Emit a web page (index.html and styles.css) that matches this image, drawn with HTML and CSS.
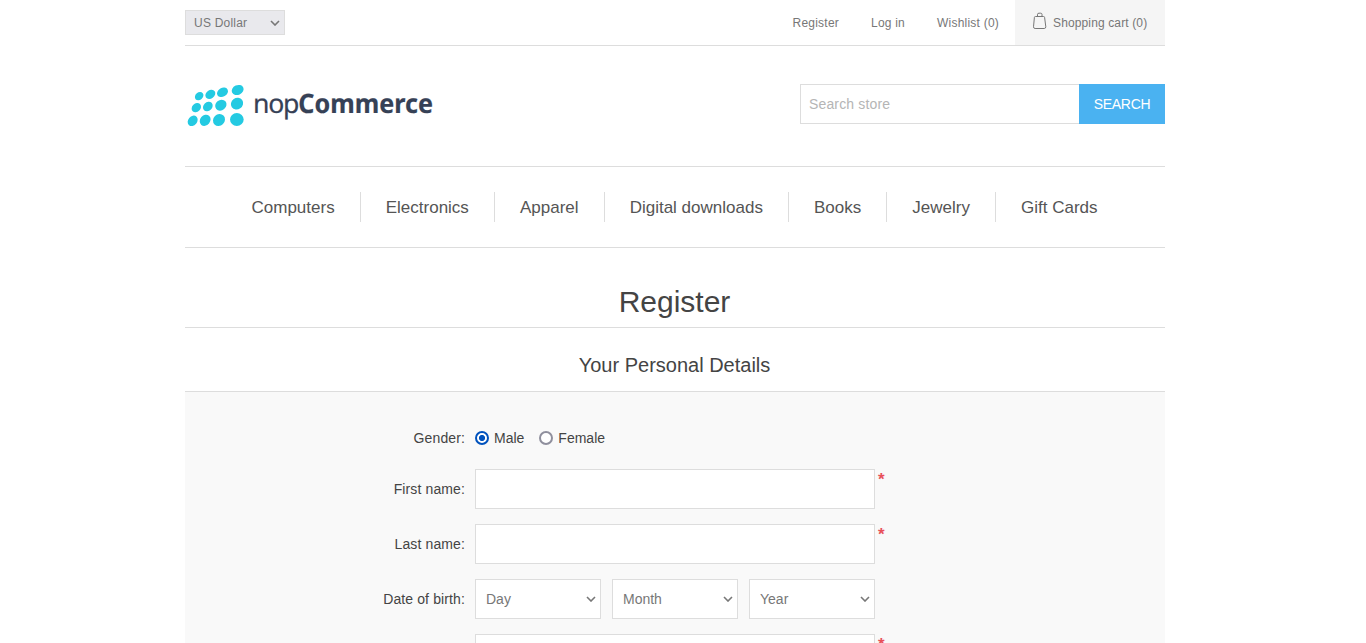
FILE: index.html
```html
<!DOCTYPE html>
<html lang="en">
<head>
<meta charset="utf-8">
<title>nopCommerce demo store. Register</title>
<link rel="stylesheet" href="styles.css">
</head>
<body>
<div class="page">
  <header>
    <div class="topbar">
      <div class="select currency">
        <select aria-label="Currency"><option>US Dollar</option></select>
        <svg class="chevron" viewBox="0 0 10 6"><path d="M1 1l4 4 4-4"/></svg>
      </div>
      <nav class="links">
        <a href="#">Register</a>
        <a href="#">Log in</a>
        <a href="#">Wishlist (0)</a>
        <a href="#" class="cart">
          <svg class="bag" viewBox="0 0 14 17"><path d="M2.400 4.500h8.200q.9 0 1 .9l1.200 9.400q0 1.700-1.600 1.700H2.100Q.5 16.500.5 14.800l.9-9.400q.1-.9 1-.9zM4.500 4.500V2.300Q4.500 1.200 6 1.200h1.500q1.500 0 1.500 1.100v2.200"/></svg>
          Shopping cart (0)
        </a>
      </nav>
    </div>
    <div class="brandbar">
      <svg class="logo" viewBox="15 0 750 180" role="img" aria-label="nopCommerce">
        <g fill="#24cae2">
          <ellipse cx="57.500" cy="60.500" rx="14" ry="11" transform="rotate(-40 57.500 60.500)"/>
          <ellipse cx="91" cy="55" rx="16" ry="12.500" transform="rotate(-35 91 55)"/>
          <ellipse cx="127.500" cy="49" rx="17.500" ry="13" transform="rotate(-30 127.500 49)"/>
          <ellipse cx="173" cy="42" rx="18.500" ry="14.500" transform="rotate(-25 173 42)"/>
          <ellipse cx="49" cy="95" rx="15.500" ry="12.500" transform="rotate(-45 49 95)"/>
          <ellipse cx="83.500" cy="91.500" rx="16" ry="13" transform="rotate(-45 83.500 91.500)"/>
          <ellipse cx="122.500" cy="87.500" rx="18" ry="15.500" transform="rotate(-40 122.500 87.500)"/>
          <ellipse cx="171" cy="83" rx="19" ry="17" transform="rotate(-35 171 83)"/>
          <ellipse cx="38" cy="134.500" rx="17" ry="13.500" transform="rotate(-50 38 134.500)"/>
          <ellipse cx="75.500" cy="133" rx="18" ry="15" transform="rotate(-50 75.500 133)"/>
          <ellipse cx="117" cy="132" rx="19" ry="17" transform="rotate(-45 117 132)"/>
          <ellipse cx="170.500" cy="130.500" rx="20.500" ry="19.500"/>
        </g>
        <text class="word" x="219" y="110" textLength="139">nop</text>
        <text class="word strong" x="355" y="110" textLength="404" lengthAdjust="spacingAndGlyphs">Commerce</text>
      </svg>
      <form class="search">
        <input type="text" placeholder="Search store" aria-label="Search store">
        <button type="button">SEARCH</button>
      </form>
    </div>
    <nav class="menu">
      <a href="#">Computers</a>
      <a href="#">Electronics</a>
      <a href="#">Apparel</a>
      <a href="#">Digital downloads</a>
      <a href="#">Books</a>
      <a href="#">Jewelry</a>
      <a href="#">Gift Cards</a>
    </nav>
  </header>
  <main>
    <h1>Register</h1>
    <h2>Your Personal Details</h2>
    <form class="details">
      <div class="row gender">
        <span class="label">Gender:</span>
        <label class="choice"><input type="radio" name="gender" checked>Male</label>
        <label class="choice"><input type="radio" name="gender">Female</label>
      </div>
      <div class="row">
        <label class="label" for="first">First name:</label>
        <input class="field" id="first" type="text"><span class="required">*</span>
      </div>
      <div class="row">
        <label class="label" for="last">Last name:</label>
        <input class="field" id="last" type="text"><span class="required">*</span>
      </div>
      <div class="row">
        <span class="label">Date of birth:</span>
        <div class="dates">
          <div class="select"><select aria-label="Day"><option>Day</option></select><svg class="chevron" viewBox="0 0 10 6"><path d="M1 1l4 4 4-4"/></svg></div>
          <div class="select"><select aria-label="Month"><option>Month</option></select><svg class="chevron" viewBox="0 0 10 6"><path d="M1 1l4 4 4-4"/></svg></div>
          <div class="select"><select aria-label="Year"><option>Year</option></select><svg class="chevron" viewBox="0 0 10 6"><path d="M1 1l4 4 4-4"/></svg></div>
        </div>
      </div>
      <div class="row">
        <span class="label"></span>
        <input class="field" type="text" aria-label="Email"><span class="required">*</span>
      </div>
    </form>
  </main>
</div>
</body>
</html>
```
FILE: styles.css
```css
* { box-sizing: border-box; }
html { height: 100%; overflow: hidden; }
body {
  height: 100%;
  overflow: hidden;
  margin: 0;
  padding-right: 16px;
  background: #fff;
  color: #444;
  font: 14px "Liberation Sans", Arial, sans-serif;
}
a { color: inherit; text-decoration: none; }
input, select, button { font: inherit; letter-spacing: inherit; border-radius: 0; margin: 0; }
.page { width: 980px; margin: 0 auto; }

.select { position: relative; }
.select select {
  appearance: none;
  display: block;
  width: 100%;
  height: 100%;
  border: 1px solid #ddd;
  background: #fff;
  color: #777;
}
.chevron {
  position: absolute;
  right: 5px;
  top: 50%;
  width: 10px;
  height: 6px;
  margin-top: -3px;
  fill: none;
  stroke: #777;
  stroke-width: 1.6;
  pointer-events: none;
}

.topbar {
  display: flex;
  justify-content: space-between;
  align-items: center;
  height: 46px;
  border-bottom: 1px solid #ddd;
  font-size: 12px;
  letter-spacing: .22px;
  color: #777;
}
.currency { width: 100px; height: 25px; }
.currency select { padding: 0 8px; background: #e9e9ed; }
.links { display: flex; height: 45px; line-height: 46px; }
.links a { margin-right: 32px; }
.links a:nth-child(3) { margin-right: 16px; }
.links .cart {
  display: flex;
  width: 150px;
  margin: 0;
  padding-left: 18px;
  background: #f5f5f5;
  letter-spacing: .13px;
}
.bag {
  width: 14px;
  height: 17px;
  margin: 12px 6px 0 0;
  fill: none;
  stroke: #777;
}

.brandbar {
  display: flex;
  justify-content: space-between;
  align-items: flex-start;
  height: 120px;
}
.logo { width: 250px; height: 60px; margin-top: 30px; }
.word {
  font: 80px "Noto Sans", sans-serif;
  fill: #364156;
  stroke: #364156;
  stroke-width: .6;
  text-rendering: geometricPrecision;
}
.strong { font-weight: 700; }
.search { display: flex; margin-top: 38px; height: 40px; }
.search input {
  width: 279px;
  padding: 0 8px;
  border: 1px solid #ddd;
  border-right: 0;
  letter-spacing: .15px;
}
.search input::placeholder { color: #b5b5b5; }
.search button {
  width: 86px;
  padding: 0;
  border: 0;
  background: #4ab2f1;
  color: #fff;
  letter-spacing: -.3px;
}

.menu {
  display: flex;
  justify-content: center;
  align-items: center;
  height: 82px;
  border: solid #ddd;
  border-width: 1px 0;
  font-size: 17px;
  color: #555;
}
.menu a { height: 30px; padding: 0 25px 0 25.1px; line-height: 32px; border-left: 1px solid #ddd; }
.menu a:first-child { border: 0; }
.menu a:last-child { padding-right: 26px; }

h1, h2 { margin: 0; font-weight: 400; text-align: center; }
h1 {
  height: 80px;
  padding: 36px 1px 0 0;
  border-bottom: 1px solid #ddd;
  font-size: 30px;
  line-height: 36px;
}
h2 { height: 63px; padding: 25px 1px 0 0; font-size: 20px; line-height: 24px; }

.details {
  display: flex;
  flex-direction: column;
  gap: 15px;
  padding-top: 37px;
  height: 252px;
  overflow: hidden;
  border-top: 1px solid #ddd;
  background: #f9f9f9;
}
.row { display: flex; align-items: center; height: 40px; flex: none; }
.gender { height: 18px; margin-bottom: 7px; }
.label { width: 280px; margin-right: 10px; text-align: right; letter-spacing: .12px; }
.choice { display: flex; align-items: center; margin-right: 15px; }
.choice input {
  appearance: none;
  width: 14px;
  height: 14px;
  margin-right: 5px;
  border: 2px solid #8f8f9d;
  border-radius: 50%;
  background: #fff;
}
.choice input:checked {
  border-color: #0052bd;
  background: radial-gradient(circle, #0052bd 2.7px, #fff 3.4px);
}
.field { width: 400px; height: 40px; border: 1px solid #ddd; background: #fff; }
.required { align-self: flex-start; margin: 1px 0 0 3px; color: #e8505a; font-size: 17px; font-weight: 700; line-height: 20px; }
.dates { display: flex; justify-content: space-between; width: 400px; height: 40px; }
.dates .select { width: 126px; }
.dates select { padding: 0 10px; }
```
